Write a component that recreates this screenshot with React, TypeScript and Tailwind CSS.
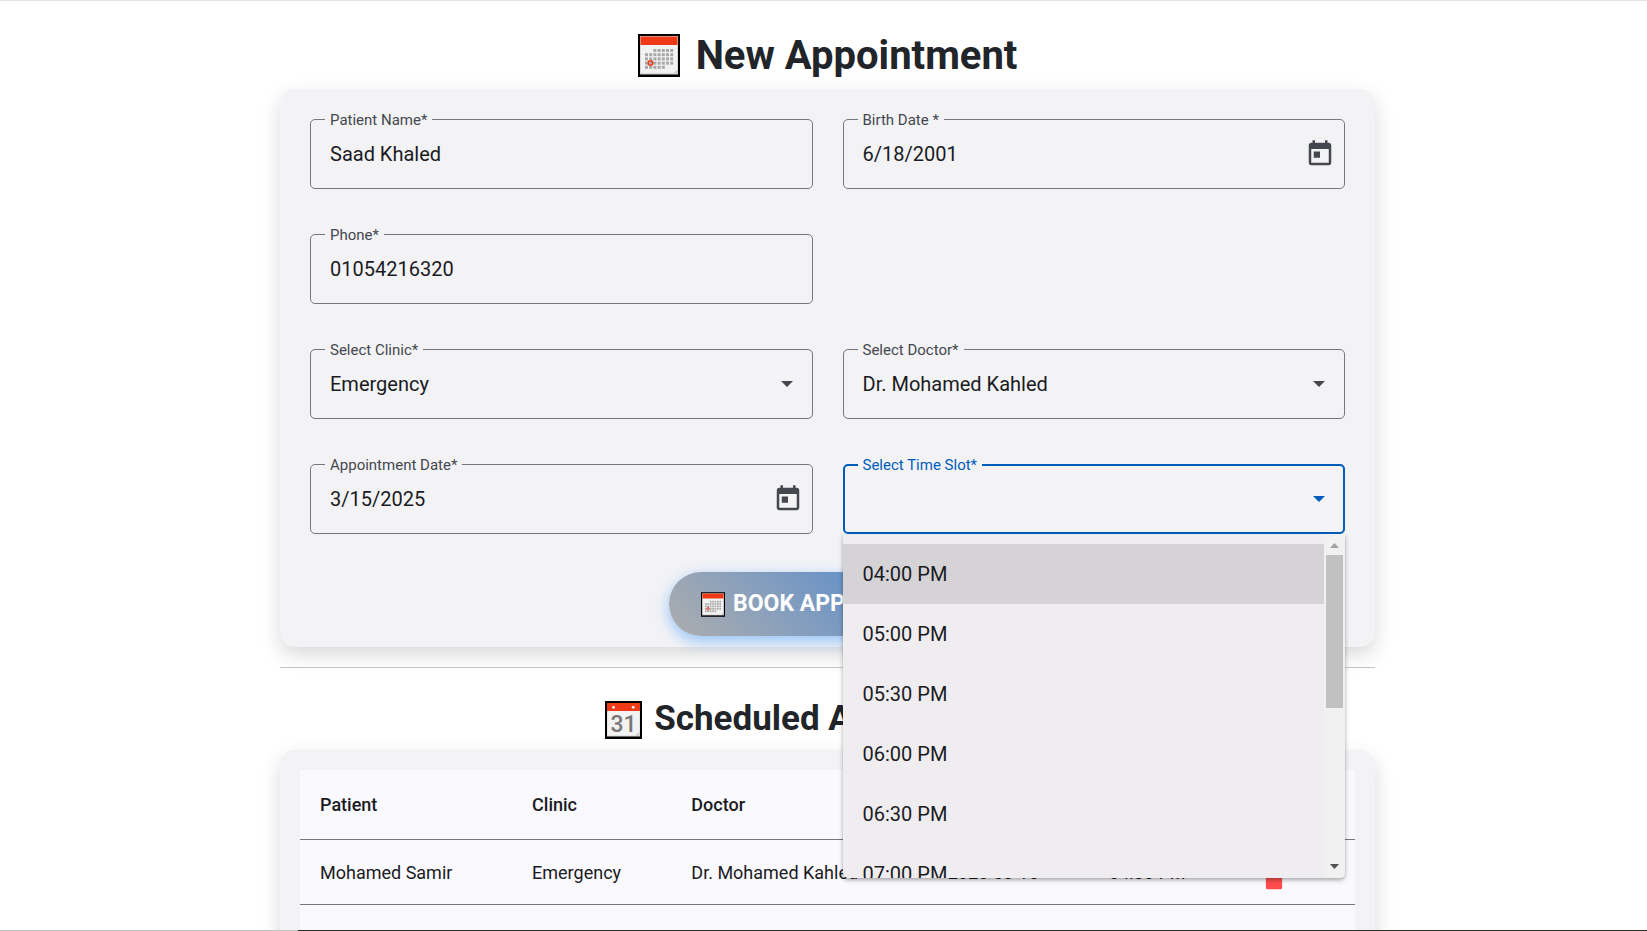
import React, { ReactNode } from "react";

function PlainCalendar({ className }: { className: string }) {
  const dots: ReactNode[] = [];
  for (let r = 0; r < 5; r++) {
    for (let c = 0; c < 7; c++) {
      if ((r === 0 && c < 2) || (r === 4 && c > 4)) continue;
      dots.push(<rect key={`${r}-${c}`} x={7 + c * 4.2} y={15 + r * 4.2} width="3" height="3" fill="#a8a8a8" />);
    }
  }
  return (
    <svg viewBox="0 0 42 43" className={className} aria-hidden="true">
      <rect width="42" height="43" fill="#000" />
      <rect x="2" y="2" width="38" height="38.5" fill="#d8d8d8" />
      <rect x="3" y="3" width="36" height="36" fill="#f2f2f2" />
      <rect x="2.5" y="2.5" width="37" height="8.5" fill="#f03a17" />
      {dots}
      <circle cx="12.5" cy="29" r="2.3" fill="none" stroke="#f03a17" strokeWidth="1.5" />
      <path d="M35 39.5L39.5 35V39.5Z" fill="#cfcfcf" />
    </svg>
  );
}

function DatedCalendar({ className }: { className: string }) {
  return (
    <svg viewBox="0 0 37 38" className={className} aria-hidden="true">
      <rect width="37" height="38" fill="#000" />
      <rect x="2" y="2" width="33" height="33.5" fill="#d8d8d8" />
      <rect x="2.5" y="2.5" width="32" height="32" fill="#f2f2f2" />
      <rect x="2" y="2" width="33" height="8" fill="#f03a17" />
      <circle cx="8.5" cy="6.3" r="1.4" fill="#fff" />
      <circle cx="28.2" cy="6.3" r="1.4" fill="#fff" />
      <text x="18.5" y="31" textAnchor="middle" fontFamily="Roboto, sans-serif" fontSize="23" fontWeight="500" fill="#777">31</text>
      <path d="M30 35L34.5 30.5V35Z" fill="#cfcfcf" />
    </svg>
  );
}

function TodayIcon() {
  return (
    <svg viewBox="0 0 24 24" className="size-[30px] fill-current" aria-hidden="true">
      <path d="M19 3h-1V1h-2v2H8V1H6v2H5c-1.11 0-1.99.9-1.99 2L3 19c0 1.1.89 2 2 2h14c1.1 0 2-.9 2-2V5c0-1.1-.9-2-2-2zm0 16H5V8h14v11zM7 10h5v5H7z" />
    </svg>
  );
}

function Arrow() {
  return (
    <svg viewBox="0 0 12 6" className="pointer-events-none mr-5 h-[6px] w-3 shrink-0 fill-current" aria-hidden="true">
      <path d="M0 0h12L6 6z" />
    </svg>
  );
}

type FieldProps = { id: string; label: string; focused?: boolean; children: ReactNode };

function Field({ id, label, focused, children }: FieldProps) {
  return (
    <div className="relative h-[70px]">
      <fieldset
        className={
          focused
            ? "absolute inset-x-0 -top-[11px] bottom-0 rounded-[5px] border-2 border-[#005cbb] pl-[13px]"
            : "absolute inset-x-0 -top-3 bottom-0 rounded-[5px] border border-[#74777f] pl-[14px]"
        }
      >
        <legend
          className={
            focused
              ? "px-[5px] text-[15px] leading-6 text-[#005cbb]"
              : "px-[5px] pt-[2px] text-[15px] leading-[22px] text-[#44474e]"
          }
        >
          <label htmlFor={id}>{label}</label>
        </legend>
      </fieldset>
      <div className={focused ? "relative flex h-full items-center text-[#005cbb]" : "relative flex h-full items-center text-[#44474e]"}>
        {children}
      </div>
    </div>
  );
}

const control = "h-full min-w-0 flex-1 appearance-none bg-transparent pl-5 text-xl text-[#1a1b1f] outline-none";

function TextField({ id, label, value, date }: { id: string; label: string; value: string; date?: boolean }) {
  return (
    <Field id={id} label={label}>
      <input id={id} defaultValue={value} className={control} />
      {date && (
        <button type="button" aria-label="Open calendar" className="mr-[10px]">
          <TodayIcon />
        </button>
      )}
    </Field>
  );
}

function SelectField({ id, label, value, focused }: { id: string; label: string; value: string; focused?: boolean }) {
  return (
    <Field id={id} label={label} focused={focused}>
      <select id={id} className={control}>
        <option>{value}</option>
      </select>
      <Arrow />
    </Field>
  );
}

const slots = ["04:00 PM", "05:00 PM", "05:30 PM", "06:00 PM", "06:30 PM", "07:00 PM"];

function SlotMenu() {
  return (
    <div className="absolute inset-x-0 top-full z-10 flex h-[344px] overflow-hidden rounded-b-[5px] bg-[#efedf0] shadow-[0_2px_4px_rgba(0,0,0,0.35)]">
      <ul role="listbox" aria-label="Time slots" className="flex-1 overflow-hidden pt-[10px]">
        {slots.map((slot, i) => (
          <li
            key={slot}
            role="option"
            aria-selected={i === 0}
            className={
              i === 0
                ? "flex h-[60px] items-center bg-[#d5d3d6] px-5 text-xl text-[#1a1b1f]"
                : "flex h-[60px] items-center px-5 text-xl text-[#1a1b1f]"
            }
          >
            {slot}
          </li>
        ))}
      </ul>
      <div className="flex w-[21px] flex-col items-center bg-[#f1f1f1]">
        <svg viewBox="0 0 9 5" className="mt-[9px] mb-[7px] h-[5px] w-[9px]" aria-hidden="true">
          <path d="M0 5h9L4.5 0z" fill="#a3a3a3" />
        </svg>
        <div className="h-[153px] w-[17px] bg-[#c1c1c1]" />
        <svg viewBox="0 0 9 5" className="mt-auto mb-[9px] h-[5px] w-[9px]" aria-hidden="true">
          <path d="M0 0h9L4.5 5z" fill="#505050" />
        </svg>
      </div>
    </div>
  );
}

const appointments = [
  { patient: "Mohamed Samir", clinic: "Emergency", doctor: "Dr. Mohamed Kahled", date: "2025-03-15", time: "04:30 PM" },
];

export default function App() {
  return (
    <div className="h-screen overflow-hidden border-t border-[#e0e2ec] bg-white pl-2 font-[Roboto,sans-serif] text-[#212529]">
      <main className="mx-auto max-w-[1095px]">
        <h1 className="flex h-[88px] items-center justify-center gap-4 pt-[21px] text-[40px] font-bold">
          <PlainCalendar className="h-[43px] w-[42px]" />
          New Appointment
        </h1>
        <form className="rounded-[15px] bg-[#f3f3f6] px-[30px] pt-[30px] pb-[11px] shadow-[0_8px_20px_rgba(0,0,0,0.15)]">
          <div className="grid grid-cols-2 gap-x-[30px] gap-y-[45px]">
            <TextField id="patient" label="Patient Name*" value="Saad Khaled" />
            <TextField id="birth" label="Birth Date *" value="6/18/2001" date />
            <TextField id="phone" label="Phone*" value="01054216320" />
            <div />
            <SelectField id="clinic" label="Select Clinic*" value="Emergency" />
            <SelectField id="doctor" label="Select Doctor*" value="Dr. Mohamed Kahled" />
            <TextField id="date" label="Appointment Date*" value="3/15/2025" date />
            <div className="relative">
              <SelectField id="slot" label="Select Time Slot*" value="" focused />
              <SlotMenu />
            </div>
          </div>
          <button
            type="button"
            className="mx-auto mt-[38px] flex h-16 w-[317px] items-center gap-2 rounded-full bg-linear-45 from-[#adadad] to-[#3a80d2] px-8 text-[23px] font-bold whitespace-nowrap text-white shadow-[0_5px_15px_rgba(0,123,255,0.4)]"
          >
            <PlainCalendar className="h-[25px] w-6 shrink-0" />
            BOOK APPOINTMENT
          </button>
        </form>
        <hr className="mt-5 border-[#c4c4c7]" />
        <h2 className="flex h-[82px] items-center justify-center gap-3 pt-[21px] text-[35px] font-bold">
          <DatedCalendar className="h-[38px] w-[37px]" />
          Scheduled Appointments
        </h2>
        <section className="rounded-[15px] bg-[#f3f3f6] p-5 shadow-[0_8px_20px_rgba(0,0,0,0.15)]">
          <table className="w-full table-fixed bg-[#faf9fd] text-left text-lg text-[#1a1b1f]">
            <colgroup>
              <col className="w-[20.1%]" />
              <col className="w-[15.1%]" />
              <col className="w-[24.3%]" />
              <col className="w-[15.3%]" />
              <col className="w-[14.2%]" />
              <col />
            </colgroup>
            <thead>
              <tr className="h-[69px] border-b border-[#74777f]">
                {["Patient", "Clinic", "Doctor", "Date", "Time", "Actions"].map((h) => (
                  <th key={h} className="px-5 pt-[2px] font-medium">{h}</th>
                ))}
              </tr>
            </thead>
            <tbody>
              {appointments.map((a) => (
                <tr key={a.patient} className="h-[65px] border-b border-[#74777f]">
                  <td className="px-5 pt-[2px] whitespace-nowrap">{a.patient}</td>
                  <td className="px-5 pt-[2px] whitespace-nowrap">{a.clinic}</td>
                  <td className="px-5 pt-[2px] whitespace-nowrap">{a.doctor}</td>
                  <td className="px-5 pt-[2px] whitespace-nowrap">{a.date}</td>
                  <td className="px-5 pt-[2px] whitespace-nowrap">{a.time}</td>
                  <td className="px-5">
                    <button type="button" aria-label="Delete appointment" className="block pt-3">
                      <svg viewBox="0 0 24 24" className="size-[30px]" fill="#ff4d4d" aria-hidden="true">
                        <path d="M5.5 19.5c0 1 .8 1.5 1.5 1.5h10c.8 0 1.5-.6 1.5-1.5V7h-13zM19 4h-3.5l-1-1h-5l-1 1H5v2h14z" />
                      </svg>
                    </button>
                  </td>
                </tr>
              ))}
              <tr className="h-[65px]">
                <td colSpan={6} />
              </tr>
            </tbody>
          </table>
        </section>
      </main>
      <div className="fixed inset-x-0 bottom-0 flex h-px">
        <div className="w-[298px] bg-[#c0c0c0]" />
        <div className="flex-1 bg-[#2b2d28]" />
      </div>
    </div>
  );
}
